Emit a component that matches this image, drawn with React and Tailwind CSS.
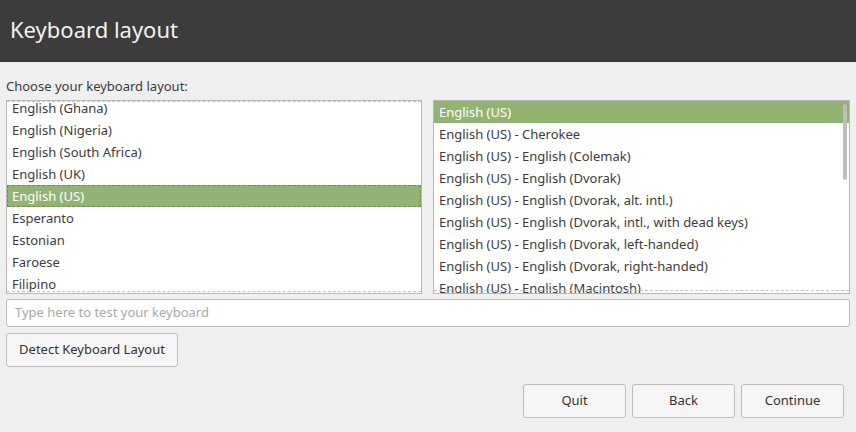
import React from "react";

const LEFT = [
  "English (Ghana)",
  "English (Nigeria)",
  "English (South Africa)",
  "English (UK)",
  "English (US)",
  "Esperanto",
  "Estonian",
  "Faroese",
  "Filipino",
  "Finnish",
];

const RIGHT = [
  "English (US)",
  "English (US) - Cherokee",
  "English (US) - English (Colemak)",
  "English (US) - English (Dvorak)",
  "English (US) - English (Dvorak, alt. intl.)",
  "English (US) - English (Dvorak, intl., with dead keys)",
  "English (US) - English (Dvorak, left-handed)",
  "English (US) - English (Dvorak, right-handed)",
  "English (US) - English (Macintosh)",
  "English (US) - English (Norman)",
];

function Row({ label, selected, focus }) {
  if (selected) {
    return (
      <div className="h-[22px] bg-[#92b372] text-white flex items-center">
        <div
          className={
            "flex h-full w-full items-center pt-[1px] " +
            (focus ? "border border-dashed border-[#6f8f52] pl-[4px]" : "pl-[5px]")
          }
        >
          {label}
        </div>
      </div>
    );
  }
  return <div className="flex h-[22px] items-center pl-[5px] pt-[1px]">{label}</div>;
}

function Btn({ children, className = "" }) {
  return (
    <button
      type="button"
      className={
        "h-[34px] rounded-[3px] border border-[#bcbcbc] bg-[#f5f5f5] text-[13px] text-[#333] " +
        className
      }
    >
      {children}
    </button>
  );
}

export default function App() {
  return (
    <div
      className="flex h-[432px] w-[856px] flex-col bg-[#efefef] text-[#3c3c3c]"
      style={{ fontFamily: '"Noto Sans", "Open Sans", sans-serif' }}
    >
      <div className="flex h-[62px] items-center bg-[#3c3c3c] pb-[3px] pl-[10px] text-[22px] text-[#f2f2f2]">
        Keyboard layout
      </div>

      <div className="flex flex-1 flex-col px-[6px]">
        <div className="mt-[15px] h-[19px] text-[13px] leading-[19px]">
          Choose your keyboard layout:
        </div>

        <div className="mt-[4px] flex gap-[11px] text-[13px]">
          <div className="relative h-[194px] w-[416px] overflow-hidden border border-[#b8b8b8] bg-white">
            <div className="mt-[-4px]">
              {LEFT.map((l) => (
                <Row key={l} label={l} selected={l === "English (US)"} focus />
              ))}
            </div>
            <div className="absolute left-0 right-0 top-0 border-t border-dashed border-[#c4c4c4]" />
            <div className="absolute bottom-[1px] left-0 right-0 border-t border-dashed border-[#c4c4c4]" />
          </div>

          <div className="relative h-[194px] w-[417px] overflow-hidden border border-[#b8b8b8] bg-white">
            <div>
              {RIGHT.map((l, i) => (
                <Row key={l} label={l} selected={i === 0} />
              ))}
            </div>
            <div className="absolute bottom-[2px] left-0 right-0 border-t border-dashed border-[#c4c4c4]" />
            <div className="absolute right-[2px] top-[3px] h-[76px] w-[4px] rounded-full bg-[#bdbdbd]" />
          </div>
        </div>

        <div className="mt-[5px] flex h-[28px] items-center rounded-[3px] border border-[#bcbcbc] bg-white pl-[8px] text-[13px] text-[#a8a8a8]">
          Type here to test your keyboard
        </div>

        <div className="mt-[6px]">
          <Btn className="w-[172px]">Detect Keyboard Layout</Btn>
        </div>

        <div className="mt-[17px] flex justify-end gap-[6px] pr-[6px]">
          <Btn className="w-[103px]">Quit</Btn>
          <Btn className="w-[103px]">Back</Btn>
          <Btn className="w-[103px]">Continue</Btn>
        </div>
      </div>
    </div>
  );
}
